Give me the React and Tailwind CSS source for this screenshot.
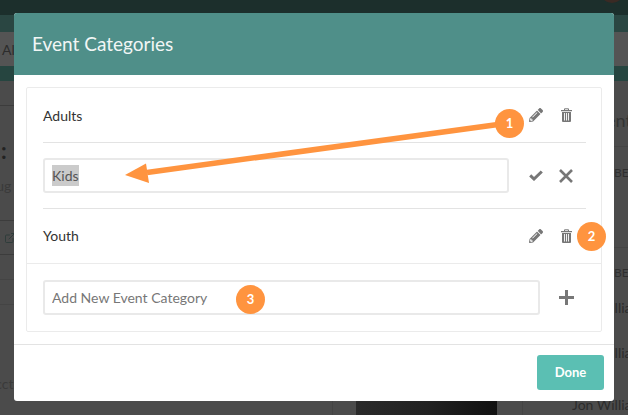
import React from 'react';
import { FaPencilAlt } from 'react-icons/fa';
import { ExternalLink } from 'lucide-react';

const lato = { fontFamily: 'Lato, sans-serif' };

const PencilIcon = () => <FaPencilAlt className="w-[14px] h-[14px] text-[#777]" />;

const TrashIcon = () => (
    <svg width="11" height="14" viewBox="0 0 11 14" fill="none" className="text-[#777]">
        <path d="M3.5 2V0.8h4V2" stroke="currentColor" strokeWidth="1" />
        <path d="M0 2h11v1.2H0z" fill="currentColor" />
        <path d="M1 4h9v9a1 1 0 0 1-1 1H2a1 1 0 0 1-1-1z" fill="currentColor" />
        <path d="M3.5 5v7.5M5.5 5v7.5M7.5 5v7.5" stroke="#fff" strokeWidth="0.9" />
    </svg>
);

const CheckIcon = () => (
    <svg width="14" height="11" viewBox="0 0 14 11" fill="none" className="text-[#777]">
        <path d="M1.2 5.4 5 9 12.8 1.5" stroke="currentColor" strokeWidth="3" />
    </svg>
);

const CloseIcon = () => (
    <svg width="14" height="14" viewBox="0 0 14 14" fill="none" className="text-[#777]">
        <path d="M1 1l12 12M13 1 1 13" stroke="currentColor" strokeWidth="2.6" />
    </svg>
);

const PlusIcon = () => (
    <svg width="15" height="15" viewBox="0 0 15 15" fill="none" className="text-[#777]">
        <path d="M7.5 0v15M0 7.5h15" stroke="currentColor" strokeWidth="3" />
    </svg>
);

const Badge = ({ className, children }) => (
    <div className={`absolute w-[29px] h-[29px] rounded-full bg-[#ff943f] text-white text-[13px] font-bold flex items-center justify-center ${className}`}>
        {children}
    </div>
);

const CategoryRow = ({ name, textClass = '' }) => (
    <div className="h-[54px] flex items-center justify-between pr-[14px]">
        <span className={`text-[14px] text-[#333] ${textClass}`}>{name}</span>
        <div className="flex items-center gap-[18px]">
            <PencilIcon />
            <TrashIcon />
        </div>
    </div>
);

const Member = ({ name, note, height }) => (
    <div className={`${height} pt-[1px] leading-[20px]`}>
        <div className="text-[14px] text-[#2c2c2c]">{name}</div>
        <div className="text-[13px] text-[#383838] mt-[3px]">{note}</div>
    </div>
);

// the dimmed page behind the modal
const Backdrop = () => (
    <div className="h-full flex flex-col bg-[#4b4b4b] text-[#2c2c2c]">
        <div className="h-[15px] shrink-0 bg-[#1c2f2c] flex justify-end overflow-hidden">
            <div className="w-[24px] h-[24px] rounded-full bg-[#3a2a24] -mt-[21px] mr-[4px]" />
        </div>
        <div className="h-[17px] shrink-0 bg-[#2a4642]" />
        <div className="h-[34px] shrink-0 bg-[#545454] flex items-center pl-[2px] text-[14px]">All</div>
        <div className="h-[15px] shrink-0 bg-[#264540]" />
        <div className="flex flex-1 overflow-hidden">
            <div className="w-[14px] shrink-0 overflow-hidden whitespace-nowrap text-[14px] text-[#333]">
                <div className="h-[25px] border-b border-[#3c3c3c]" />
                <div className="h-[64px] pt-[32px] pl-[1px] text-[22px] leading-[26px] font-bold text-[#222]">:</div>
                <div className="h-[30px] pt-[6px] -ml-[13px] leading-[20px] text-[#3a3a3a]">Aug</div>
                <div className="h-[21px] border-b border-[#3c3c3c]" />
                <div className="h-[34px] border-b border-[#3c3c3c] flex items-center pl-[4px]">
                    <ExternalLink className="w-[12px] h-[12px] shrink-0 text-[#2f3d3b]" />
                </div>
                <div className="h-[25px] border-b border-[#444]" />
                <div className="h-[25px] border-b border-[#444]" />
                <div className="pt-[69px] -ml-[14px] leading-[20px] text-[#3a3a3a]">Acct</div>
            </div>
            <div className="flex-1 flex justify-end">
                <div className="w-[191px] h-[14px] self-end mr-[49px] border-x border-[#444] pl-[23px]">
                    <div className="w-[141px] h-full bg-gradient-to-r from-[#2a2a2a] via-[#222] to-[#111]" />
                </div>
            </div>
            <div className="w-[56px] shrink-0 overflow-hidden whitespace-nowrap pt-[27px]">
                <div className="h-[39px] border-b border-[#444] text-[18px] text-[#333] leading-[24px]">Present</div>
                <div className="h-[50px] pt-[17px] text-[12px] leading-[18px] text-[#2f2f2f]">DECEMBER</div>
                <Member name="Jon R" note="Heart" height="h-[50px]" />
                <div className="h-[50px] border-t border-[#444] pt-[16px] text-[12px] leading-[18px] text-[#2f2f2f]">DECEMBER</div>
                <Member name="Jon Williams" note="Team" height="h-[45px]" />
                <Member name="Jon Williams" note="Team" height="h-[52px]" />
                <div className="text-[14px] pt-[1px] leading-[20px] text-[#2c2c2c]">Jon Williams</div>
            </div>
        </div>
    </div>
);

const App = () => (
    <div className="relative w-[628px] h-[415px] overflow-hidden" style={lato}>
        <Backdrop />

        <div className="absolute left-[14px] top-[13px] w-[600px] h-[388px] bg-white rounded-[3px] overflow-hidden flex flex-col">
            <div className="h-[62px] shrink-0 bg-[#4f8f89] flex items-center pl-[18px] text-[19px] text-[#f1f6f5]">
                Event Categories
            </div>
            <div className="px-3 pt-3 pb-3">
                <div className="h-[245px] border border-[#ebebeb] rounded-[2px]">
                    <div className="ml-4 mr-[15px]">
                        <div className="border-b border-[#e3e3e3]">
                            <CategoryRow name="Adults" />
                        </div>
                        <div className="h-[66px] flex items-center border-b border-[#e3e3e3]">
                            <div className="w-[466px] h-[35px] border-2 border-[#e9e9e9] rounded-[3px] flex items-center pl-[7px] text-[14px] text-[#555]">
                                <span className="bg-[#cbcbcb]">Kids</span>
                            </div>
                            <div className="ml-5 flex items-center gap-4">
                                <CheckIcon />
                                <CloseIcon />
                            </div>
                        </div>
                        <CategoryRow name="Youth" textClass="pb-[2px]" />
                    </div>
                    <div className="border-t border-[#ebebeb] pl-4 pt-4 flex items-center">
                        <input
                            placeholder="Add New Event Category"
                            className="w-[497px] h-[35px] border-2 border-[#e9e9e9] rounded-[3px] pl-[7px] text-[14px] text-[#555] placeholder:text-[#777] outline-none"
                        />
                        <div className="ml-[19px] flex items-center">
                            <PlusIcon />
                        </div>
                    </div>
                </div>
            </div>
            <div className="flex-1 border-t border-[#e3e3e3] flex justify-end pt-[10px] pr-[10px]">
                <button className="w-[67px] h-[35px] bg-[#5bbfb3] rounded-[3px] text-white text-[13px] font-bold">
                    Done
                </button>
            </div>
        </div>

        {/* annotation arrow */}
        <svg className="absolute left-0 top-0 pointer-events-none" width="628" height="415" viewBox="0 0 628 415" fill="none">
            <path d="M498 124.5 147 172.5" stroke="#ff943f" strokeWidth="5.5" />
            <path d="M125 175 146 163.5 149 183z" fill="#ff943f" />
        </svg>
        <Badge className="left-[495px] top-[109px]">1</Badge>
        <Badge className="left-[577px] top-[222px]">2</Badge>
        <Badge className="left-[236px] top-[285px]">3</Badge>
    </div>
);

export default App;
